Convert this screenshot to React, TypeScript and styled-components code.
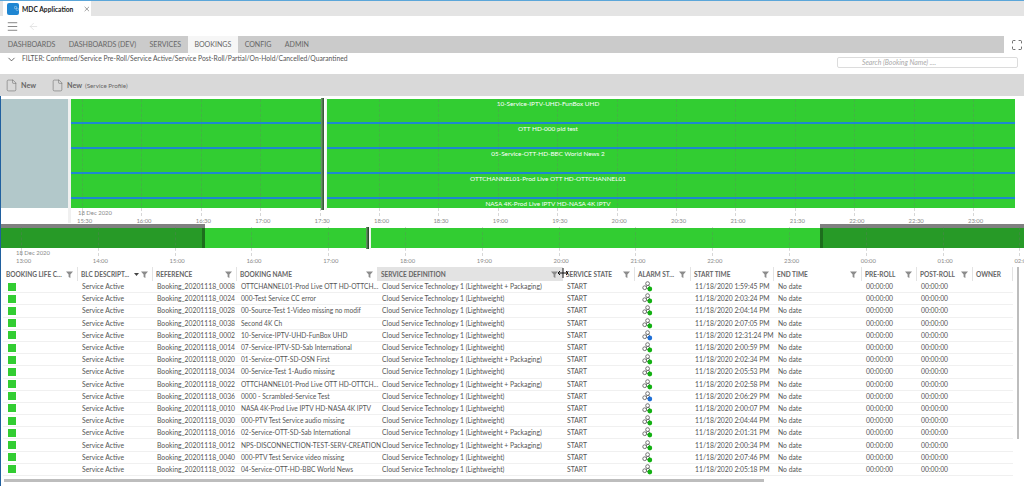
import React from 'react';
import styled, { createGlobalStyle } from 'styled-components';
import { Maximize, Menu, ArrowLeft, X, ChevronDown, File } from 'lucide-react';

const GlobalStyle = createGlobalStyle`
  html, body {
    margin: 0;
    padding: 0;
    background: #fff;
    overflow: hidden;
  }
  body {
    font-family: Lato, "Open Sans", sans-serif;
    color: #555;
  }
`;

const Page = styled.div`
  width: 1024px;
  height: 486px;
  box-sizing: border-box;
  border-top: 1px solid #5ba6d9;
  overflow: hidden;
  display: flex;
  flex-direction: column;
`;

const TabStrip = styled.div`
  height: 15px;
  flex: none;
  background: #e4e4e4;
  padding-left: 3px;
  display: flex;
`;

const AppTab = styled.div`
  width: 88px;
  background: #fff;
  display: flex;
  align-items: center;
  gap: 3px;
  padding-left: 4px;
  box-sizing: border-box;
  font-size: 6.7px;
  font-weight: 700;
  color: #222;
  white-space: nowrap;

  svg:last-child {
    margin-left: 7px;
    color: #444;
  }
`;

const AppLogo = styled.span`
  width: 12px;
  height: 12px;
  flex: none;
  border-radius: 2px;
  background: #1f86d2;
  display: flex;
  align-items: center;
  justify-content: center;
`;

const TitleBar = styled.div`
  height: 20px;
  flex: none;
  display: flex;
  align-items: center;
  gap: 9px;
  padding-left: 6px;
  color: #555;

  svg + svg {
    color: #d5d5d5;
  }
`;

const NavRow = styled.div`
  height: 17px;
  flex: none;
  display: flex;
`;

const NavBar = styled.nav`
  width: 1003px;
  background: #cbcbcb;
  display: flex;
  padding-left: 1px;
`;

const NavItem = styled.div<{ $active?: boolean }>`
  padding: 0 6.7px;
  display: flex;
  align-items: center;
  font-size: 7.05px;
  color: #666;
  white-space: nowrap;
  background: ${({ $active }) => ($active ? '#f6f6f6' : 'transparent')};
`;

const FullScreen = styled.div`
  flex: 1;
  display: flex;
  align-items: center;
  justify-content: center;
  color: #333;
  padding-left: 6px;
`;

const FilterRow = styled.div`
  height: 20px;
  flex: none;
  display: flex;
  align-items: flex-start;
  padding: 1px 6px 0 6px;
  font-size: 6.75px;
  color: #555;
  line-height: 9px;

  svg {
    color: #333;
    margin-right: 5px;
  }
`;

const FilterText = styled.span`
  flex: 1;
`;

const SearchBox = styled.div`
  width: 155px;
  height: 9px;
  margin-top: 3px;
  border: 1px solid #dcdcdc;
  border-radius: 2px;
  font-size: 6.9px;
  font-style: italic;
  color: #aaa;
  padding-left: 24px;
  line-height: 9px;
`;

const ActionBar = styled.div`
  height: 22px;
  flex: none;
  background: #d9d9d9;
  display: flex;
  align-items: center;
  padding-left: 5px;
  gap: 15px;
`;

const ActionButton = styled.div`
  display: flex;
  align-items: center;
  gap: 3px;
  font-size: 7.2px;
  font-weight: 700;
  color: #666;

  small {
    font-size: 6.3px;
    font-weight: 400;
  }
  svg {
    color: #666;
  }
`;

const TimelineRow = styled.div`
  height: 131px;
  flex: none;
  box-sizing: border-box;
  padding-top: 3px;
  display: flex;
  border-left: 1px solid #20609f;
`;

const SidePanel = styled.div`
  width: 67px;
  height: 109px;
  background: #b2c8ca;
  flex: none;
`;

const Divider = styled.div`
  width: 3px;
  height: 124px;
  flex: none;
  background: #f0f0f0;
`;

const Chart = styled.div`
  position: relative;
  width: 944px;
  flex: none;
  height: 128px;
`;

const Lane = styled.div`
  height: 25px;
  box-sizing: border-box;
  background: #32cd32;
  color: #fff;
  font-size: 6.4px;
  line-height: 10px;
  text-align: center;
  border-bottom: 2px solid #1e88d0;
  padding-left: 10px;
`;

const LastLane = styled(Lane)`
  height: 9px;
  line-height: 9px;
  border-bottom: none;
`;

const Grid = styled.span`
  position: absolute;
  top: 0;
  width: 0;
  border-left: 1px dashed rgba(110, 110, 110, 0.28);
`;

const Tick = styled.span`
  position: absolute;
  font-size: 5.9px;
  color: #8a8a8a;
  line-height: 8px;
  white-space: nowrap;
`;

const NowLine = styled.span`
  position: absolute;
  top: -1px;
  background: linear-gradient(90deg, #6f9f6f 0, #2f4a2f 50%, #fff 55%, #e8f4e8 100%);
`;

const OverviewWrap = styled.div`
  position: relative;
  height: 39px;
  flex: none;
  border-left: 1px solid #20609f;
`;

const OverviewBar = styled.div`
  position: absolute;
  left: 0;
  right: 0;
  top: 1px;
  height: 20px;
  background: #32cd32;
`;

const Shade = styled.div`
  position: absolute;
  top: -4px;
  height: 24px;
  border-top: 4px solid #808080;
  box-sizing: border-box;
  background: #279a27;
`;

const ShadeEdge = styled.span<{ $side: 'left' | 'right' }>`
  position: absolute;
  top: 0;
  bottom: 0;
  width: 3px;
  background: #1d6e1d;
  ${({ $side }) => ($side === 'left' ? 'left: 0;' : 'right: 0;')}
`;

const Table = styled.div`
  flex: 1;
  min-height: 0;
  border-left: 1px solid #20609f;
  position: relative;
  padding-left: 2px;
`;

const COLUMNS = '75px 75px 84px 141px 185px 72px 56px 83px 88px 55px 56px 40px';

const HeaderRow = styled.div`
  display: grid;
  grid-template-columns: ${COLUMNS};
  height: 14px;
  margin-top: 1px;
`;

const HeaderCell = styled.div<{ $sorted?: boolean }>`
  display: flex;
  align-items: center;
  padding: 0 4px 0 3px;
  font-size: 6.5px;
  font-weight: 700;
  color: #666;
  white-space: nowrap;
  border-right: 1px solid #e3e3e3;
  background: ${({ $sorted }) => ($sorted ? '#e3e3e3' : 'transparent')};
  box-sizing: border-box;
  gap: 2px;

  span {
    flex: 1;
  }
  svg {
    flex: none;
  }
`;

const DataRow = styled.div`
  display: grid;
  grid-template-columns: ${COLUMNS};
  width: 1010px;
  height: 12.2px;
  box-sizing: border-box;
  border-bottom: 1px solid #f0f0f0;
  align-items: center;
`;

const Cell = styled.div`
  padding-left: 4px;
  font-size: 6.8px;
  line-height: 11px;
  color: #555;
  white-space: nowrap;
`;

const NameCell = styled(Cell)`
  font-size: 6.65px;
`;

const StatusBox = styled.span`
  display: block;
  width: 8px;
  height: 8px;
  margin-left: 1px;
  background: #32cd32;
`;

const HScroll = styled.div`
  position: absolute;
  left: 3px;
  top: 213px;
  width: 760px;
  height: 2.5px;
  background: #bdbdbd;
`;

const VScroll = styled.div`
  position: absolute;
  right: 5px;
  top: 1px;
  width: 2.5px;
  height: 172px;
  background: #bdbdbd;
`;

const ResizeCursor = styled.svg`
  position: absolute;
  left: 556px;
  top: 1px;
`;

const FilterIcon = () => (
  <svg width="7" height="7" viewBox="0 0 7 7" fill="#8c8c8c">
    <path d="M0 0.5h7L4.4 3.6V7L2.6 6V3.6z" />
  </svg>
);

const SortArrow = () => (
  <svg width="5" height="3" viewBox="0 0 5 3" fill="#444">
    <path d="M0 0h5L2.5 3z" />
  </svg>
);

const AlarmIcon = ({ color }: { color: string }) => (
  <svg width="11" height="11" viewBox="0 0 11 11" fill="#fff" stroke="#666" strokeWidth="0.9" style={{ display: 'block', marginLeft: 3 }}>
    <circle cx="5.6" cy="2.6" r="1.9" />
    <circle cx="2.7" cy="6.7" r="1.9" />
    <circle cx="6" cy="6" r="1.7" />
    <circle cx="7.8" cy="8" r="2.4" fill={color} stroke="none" />
  </svg>
);

const LANES = [
  '10-Service-IPTV-UHD-FunBox UHD',
  'OTT HD-000 pid test',
  '05-Service-OTT-HD-BBC World News 2',
  'OTTCHANNEL01-Prod Live OTT HD-OTTCHANNEL01',
];

const TOP_TICKS = ['15:30', '16:00', '16:30', '17:00', '17:30', '18:00', '18:30', '19:00', '19:30', '20:00', '20:30', '21:00', '21:30', '22:00', '22:30', '23:00'];
const BOTTOM_TICKS = ['13:00', '14:00', '15:00', '16:00', '17:00', '18:00', '19:00', '20:00', '21:00', '22:00', '23:00', '00:00', '01:00', '02:00'];

const HEADERS: { label: string; sorted?: boolean; arrow?: boolean; noFilter?: boolean }[] = [
  { label: 'BOOKING LIFE C...' },
  { label: 'BLC DESCRIPT...', arrow: true },
  { label: 'REFERENCE' },
  { label: 'BOOKING NAME' },
  { label: 'SERVICE DEFINITION', sorted: true },
  { label: 'SERVICE STATE' },
  { label: 'ALARM ST...' },
  { label: 'START TIME' },
  { label: 'END TIME' },
  { label: 'PRE-ROLL' },
  { label: 'POST-ROLL' },
  { label: 'OWNER', noFilter: true },
];

const PACK = 'Cloud Service Technology 1 (Lightweight + Packaging)';
const LIGHT = 'Cloud Service Technology 1 (Lightweight)';

const ROWS: { ref: string; name: string; def: string; start: string; blue?: boolean }[] = [
  { ref: '0008', name: 'OTTCHANNEL01-Prod Live OTT HD-OTTCH...', def: PACK, start: '1:59:45 PM' },
  { ref: '0024', name: '000-Test Service CC error', def: LIGHT, start: '2:03:24 PM' },
  { ref: '0028', name: '00-Source-Test 1-Video missing no modif', def: LIGHT, start: '2:04:14 PM' },
  { ref: '0038', name: 'Second 4K Ch', def: LIGHT, start: '2:07:05 PM' },
  { ref: '0002', name: '10-Service-IPTV-UHD-FunBox UHD', def: LIGHT, start: '12:31:24 PM', blue: true },
  { ref: '0014', name: '07-Service-IPTV-SD-Sab International', def: LIGHT, start: '2:00:59 PM' },
  { ref: '0020', name: '01-Service-OTT-SD-OSN First', def: PACK, start: '2:02:34 PM' },
  { ref: '0034', name: '00-Service-Test 1-Audio missing', def: LIGHT, start: '2:05:53 PM' },
  { ref: '0022', name: 'OTTCHANNEL01-Prod Live OTT HD-OTTCH...', def: PACK, start: '2:02:58 PM' },
  { ref: '0036', name: '0000 - Scrambled-Service Test', def: LIGHT, start: '2:06:29 PM', blue: true },
  { ref: '0010', name: 'NASA 4K-Prod Live IPTV HD-NASA 4K IPTV', def: LIGHT, start: '2:00:07 PM' },
  { ref: '0030', name: '000-PTV Test Service audio missing', def: LIGHT, start: '2:04:44 PM' },
  { ref: '0016', name: '02-Service-OTT-SD-Sab International', def: PACK, start: '2:01:31 PM' },
  { ref: '0012', name: 'NPS-DISCONNECTION-TEST-SERV-CREATION', def: PACK, start: '2:00:34 PM' },
  { ref: '0040', name: '000-PTV Test Service video missing', def: LIGHT, start: '2:07:46 PM' },
  { ref: '0032', name: '04-Service-OTT-HD-BBC World News', def: LIGHT, start: '2:05:18 PM' },
];

export default function App() {
  return (
    <Page>
      <GlobalStyle />
      <TabStrip>
        <AppTab>
          <AppLogo>
            <svg width="9" height="9" viewBox="0 0 9 9" fill="none" stroke="#cfe6f7" strokeWidth="0.8">
              <rect x="0.8" y="0.8" width="4" height="4" rx="1" />
              <rect x="4" y="4" width="4" height="4" rx="1" />
            </svg>
          </AppLogo>
          MDC Application
          <X size={8} strokeWidth={1.6} />
        </AppTab>
      </TabStrip>
      <TitleBar>
        <Menu size={13} strokeWidth={1.3} />
        <ArrowLeft size={11} strokeWidth={1.3} />
      </TitleBar>
      <NavRow>
        <NavBar>
          <NavItem>DASHBOARDS</NavItem>
          <NavItem>DASHBOARDS (DEV)</NavItem>
          <NavItem>SERVICES</NavItem>
          <NavItem $active>BOOKINGS</NavItem>
          <NavItem>CONFIG</NavItem>
          <NavItem>ADMIN</NavItem>
        </NavBar>
        <FullScreen>
          <Maximize size={12} strokeWidth={1.4} />
        </FullScreen>
      </NavRow>
      <FilterRow>
        <ChevronDown size={11} strokeWidth={1.6} />
        <FilterText>FILTER: Confirmed/Service Pre-Roll/Service Active/Service Post-Roll/Partial/On-Hold/Cancelled/Quarantined</FilterText>
        <SearchBox>Search (Booking Name) ....</SearchBox>
      </FilterRow>
      <ActionBar>
        <ActionButton>
          <File size={13} strokeWidth={1} />
          New
        </ActionButton>
        <ActionButton>
          <File size={13} strokeWidth={1} />
          New <small>(Service Profile)</small>
        </ActionButton>
      </ActionBar>
      <TimelineRow>
        <SidePanel />
        <Divider />
        <Chart>
          {LANES.map((lane) => (
            <Lane key={lane}>{lane}</Lane>
          ))}
          <LastLane>NASA 4K-Prod Live IPTV HD-NASA 4K IPTV</LastLane>
          {TOP_TICKS.map((tick, i) => {
            const x = 11 + i * 59.4;
            return (
              <React.Fragment key={tick}>
                <Grid style={{ left: x, height: 117 }} />
                <Tick style={{ left: x - 5, top: 118 }}>{tick}</Tick>
              </React.Fragment>
            );
          })}
          <Tick style={{ left: 7, top: 110 }}>18 Dec 2020</Tick>
          <NowLine style={{ left: 250, width: 6, height: 112 }} />
        </Chart>
      </TimelineRow>
      <OverviewWrap>
        <OverviewBar>
          <Shade style={{ left: 0, width: 204 }}>
            <ShadeEdge $side="right" />
          </Shade>
          <Shade style={{ left: 819, right: 0 }}>
            <ShadeEdge $side="left" />
          </Shade>
          <NowLine style={{ left: 365, width: 5, height: 22 }} />
        </OverviewBar>
        {BOTTOM_TICKS.map((tick, i) => {
          const x = 20 + i * 76.8;
          return (
            <React.Fragment key={tick}>
              <Grid style={{ left: x, height: 29 }} />
              <Tick style={{ left: x - 5, top: 30 }}>{tick}</Tick>
            </React.Fragment>
          );
        })}
        <Tick style={{ left: 15, top: 22 }}>18 Dec 2020</Tick>
      </OverviewWrap>
      <Table>
        <HeaderRow>
          {HEADERS.map((h) => (
            <HeaderCell key={h.label} $sorted={h.sorted}>
              <span>{h.label}</span>
              {h.arrow && <SortArrow />}
              {!h.noFilter && <FilterIcon />}
            </HeaderCell>
          ))}
        </HeaderRow>
        {ROWS.map((row) => (
          <DataRow key={row.ref}>
            <Cell><StatusBox /></Cell>
            <Cell>Service Active</Cell>
            <Cell>Booking_20201118_{row.ref}</Cell>
            <NameCell>{row.name}</NameCell>
            <Cell>{row.def}</Cell>
            <Cell>START</Cell>
            <Cell><AlarmIcon color={row.blue ? '#1f6fd6' : '#12b012'} /></Cell>
            <Cell>11/18/2020 {row.start}</Cell>
            <Cell>No date</Cell>
            <Cell>00:00:00</Cell>
            <Cell>00:00:00</Cell>
            <Cell />
          </DataRow>
        ))}
        <HScroll />
        <VScroll />
        <ResizeCursor width="12" height="12" viewBox="0 0 12 12" fill="none" stroke="#111" strokeWidth="1">
          <path d="M6 1v10M1 6h10M3 4L1 6l2 2M9 4l2 2-2 2" />
        </ResizeCursor>
      </Table>
    </Page>
  );
}
